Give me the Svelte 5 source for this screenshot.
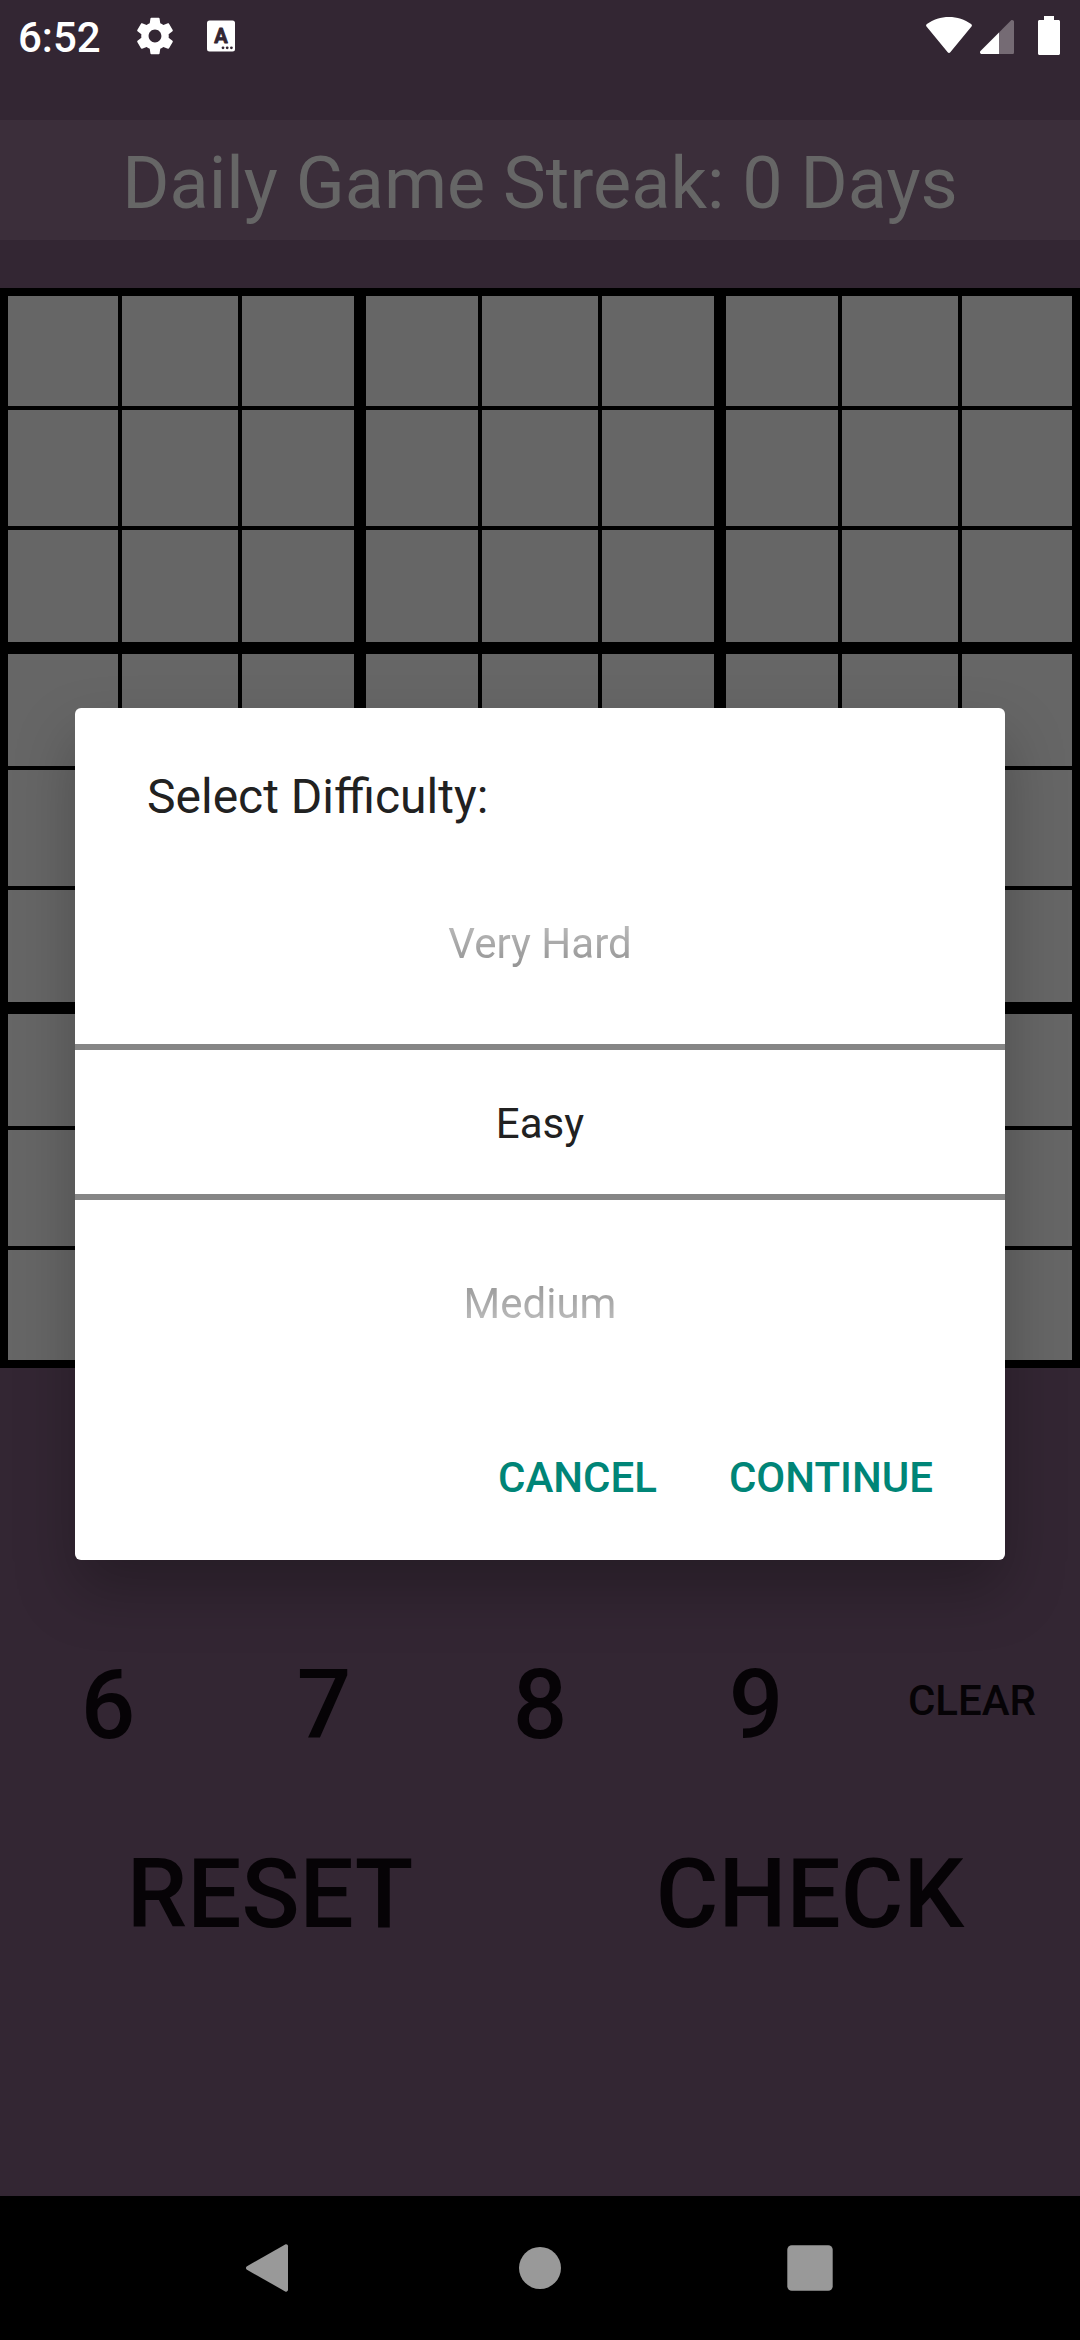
<script>
  const cells = Array.from({ length: 81 }, (_, i) => i);
  const digits = [6, 7, 8, 9];
</script>

<div class="screen">
  <header class="status">
    <span class="clock">6:52</span>
    <svg class="gear" width="44" height="44" viewBox="0 0 24 24" fill="#fff">
      <path d="M19.43 12.98c.04-.32.07-.64.07-.98s-.03-.66-.07-.98l2.11-1.65c.19-.15.24-.42.12-.64l-2-3.46c-.12-.22-.39-.3-.61-.22l-2.49 1c-.52-.4-1.08-.73-1.69-.98l-.38-2.65C14.46 2.18 14.25 2 14 2h-4c-.25 0-.46.18-.49.42l-.38 2.65c-.61.25-1.17.59-1.69.98l-2.49-1c-.23-.09-.49 0-.61.22l-2 3.46c-.13.22-.07.49.12.64l2.11 1.65c-.04.32-.07.65-.07.98s.03.66.07.98l-2.11 1.65c-.19.15-.24.42-.12.64l2 3.46c.12.22.39.3.61.22l2.49-1c.52.4 1.08.73 1.69.98l.38 2.65c.03.24.24.42.49.42h4c.25 0 .46-.18.49-.42l.38-2.65c.61-.25 1.17-.59 1.69-.98l2.49 1c.23.09.49 0 .61-.22l2-3.46c.12-.22.07-.49-.12-.64l-2.11-1.65zM12 15.5c-1.93 0-3.5-1.57-3.5-3.5s1.57-3.5 3.5-3.5 3.5 1.57 3.5 3.5-1.57 3.5-3.5 3.5z" />
    </svg>
    <svg class="keyboard" width="28" height="32" viewBox="0 0 28 32">
      <rect x="0" y="0.5" width="28" height="31" rx="2.5" fill="#fff" />
      <text class="glyph" x="14" y="22.6" text-anchor="middle">A</text>
      <g fill="#332633">
        <circle cx="16" cy="27.8" r="1.4" />
        <circle cx="20.2" cy="27.8" r="1.4" />
        <circle cx="24.4" cy="27.8" r="1.4" />
      </g>
    </svg>
    <span class="spacer"></span>
    <svg class="wifi" width="46" height="37" viewBox="0 0 46 37" fill="#fff">
      <path d="M.5 9.6C-.2 8.8 0 7.6.9 7 7.400 2.500 14.800 0 23 0s15.600 2.500 22.100 7c.9.6 1.100 1.800.4 2.600L24.300 35.300c-.7.9-1.900.9-2.600 0z" />
    </svg>
    <svg class="signal" width="34" height="34" viewBox="0 0 34 34">
      <path d="M19 12.500 30.900.600C32.100-.500 34 .300 34 2v30.400c0 .900-.700 1.600-1.600 1.600H19z" fill="#756b74" />
      <path d="M19 12.500V34H1.700C.200 34-.600 32.200.500 31.100z" fill="#fff" />
    </svg>
    <svg class="battery" width="22" height="39" viewBox="0 0 22 39" fill="#fff">
      <path d="M6 0h10v4h4.500c.8 0 1.500.7 1.500 1.500v32c0 .8-.7 1.500-1.500 1.500h-19C.7 39 0 38.300 0 37.500v-32C0 4.700.7 4 1.500 4H6z" />
    </svg>
  </header>

  <h1 class="streak">Daily Game Streak: 0 Days</h1>

  <div class="board">
    {#each cells as i (i)}
      <div
        class="cell"
        class:first-col={i % 9 === 0}
        class:last-col={i % 9 === 8}
        class:box-left={i % 9 === 3 || i % 9 === 6}
        class:box-right={i % 9 === 2 || i % 9 === 5}
        class:first-row={i < 9}
        class:last-row={i >= 72}
        class:box-top={Math.floor(i / 9) === 3 || Math.floor(i / 9) === 6}
        class:box-bottom={Math.floor(i / 9) === 2 || Math.floor(i / 9) === 5}
      ></div>
    {/each}
  </div>

  <div class="controls">
    <div class="row digits">
      {#each digits as d (d)}
        <button>{d}</button>
      {/each}
      <button class="clear">CLEAR</button>
    </div>
    <div class="row actions">
      <button>RESET</button>
      <button>CHECK</button>
    </div>
  </div>

  <nav class="navbar">
    <svg width="46" height="52" viewBox="3 0 46 52" fill="#999">
      <path d="M41.200 2.600 3 24.200c-1.400.8-1.400 2.800 0 3.600l38.200 21.600c1.300.700 2.800-.100 2.800-1.600V4.200c0-1.500-1.500-2.300-2.800-1.600z" overflow="visible" />
    </svg>
    <svg width="46" height="46" viewBox="0 0 46 46" fill="#999"><circle cx="23" cy="23" r="21" /></svg>
    <svg width="46" height="46" viewBox="0 0 46 46" fill="#999"><rect x="0.3" y="0.3" width="45.400" height="45.400" rx="4.500" /></svg>
  </nav>

  <div class="dialog" role="dialog" aria-label="Select Difficulty">
    <h2>Select Difficulty:</h2>
    <div class="picker">
      <div class="option previous">Very Hard</div>
      <div class="option selected">Easy</div>
      <div class="option next">Medium</div>
    </div>
    <div class="buttons">
      <button>CANCEL</button>
      <button>CONTINUE</button>
    </div>
  </div>
</div>

<style>
  :global(body) {
    margin: 0;
    background: #332633;
  }
  .screen {
    position: relative;
    display: flex;
    flex-direction: column;
    width: 1080px;
    height: 2340px;
    overflow: hidden;
    background: #332633;
    font-family: Roboto, "Liberation Sans", sans-serif;
  }
  button {
    border: 0;
    padding: 0;
    background: none;
    font: inherit;
    color: inherit;
  }
  .status {
    display: flex;
    align-items: flex-start;
    box-sizing: border-box;
    height: 120px;
    padding: 0 20px 0 18px;
    color: #fff;
  }
  .clock {
    width: 83px;
    line-height: 50px;
    padding-top: 13px;
    font-size: 42px;
    font-weight: 500;
    white-space: nowrap;
  }
  .gear {
    margin: 14px 0 0 32px;
  }
  .keyboard {
    margin: 20px 0 0 30px;
  }
  .glyph {
    font-family: Roboto, sans-serif;
    font-size: 20px;
    font-weight: 700;
    fill: #332633;
    stroke: #332633;
    stroke-width: 0.8px;
    stroke-linejoin: round;
  }
  .spacer {
    flex: 1;
  }
  .wifi {
    margin-top: 17px;
  }
  .signal {
    margin: 20px 0 0 8px;
  }
  .battery {
    margin: 16px 0 0 24px;
  }
  .streak {
    box-sizing: border-box;
    height: 120px;
    margin: 0;
    padding-top: 7px;
    background: #3b2e3a;
    color: #666;
    font-size: 72px;
    font-weight: 400;
    line-height: 113px;
    text-align: center;
  }
  .board {
    display: grid;
    grid-template-columns: repeat(9, 120px);
    grid-template-rows: repeat(9, 120px);
    margin-top: 48px;
    background: #000;
  }
  .cell {
    margin: 2px;
    background: #666;
  }
  .first-col {
    margin-left: 8px;
  }
  .last-col {
    margin-right: 8px;
  }
  .box-left {
    margin-left: 6px;
  }
  .box-right {
    margin-right: 6px;
  }
  .first-row {
    margin-top: 8px;
  }
  .last-row {
    margin-bottom: 8px;
  }
  .box-top {
    margin-top: 6px;
  }
  .box-bottom {
    margin-bottom: 6px;
  }
  .controls {
    flex: 1;
    padding-top: 242px;
    color: #060306;
    font-size: 96px;
    font-weight: 500;
  }
  .row {
    display: grid;
    height: 189px;
  }
  .digits {
    grid-template-columns: repeat(5, 1fr);
  }
  .actions {
    grid-template-columns: 1fr 1fr;
  }
  .clear {
    padding-bottom: 8px;
    font-size: 42px;
  }
  .navbar {
    display: grid;
    grid-template-columns: repeat(3, 270px);
    justify-content: center;
    justify-items: center;
    align-items: center;
    height: 144px;
    background: #000;
  }
  .navbar svg {
    overflow: visible;
  }
  .dialog {
    position: absolute;
    left: 75px;
    top: 708px;
    display: flex;
    flex-direction: column;
    width: 930px;
    height: 852px;
    border-radius: 6px;
    background: #fff;
    color: #212121;
    box-shadow: 0 30px 60px rgba(0, 0, 0, 0.25);
  }
  .dialog h2 {
    margin: 0;
    padding: 59px 72px 25px;
    font-size: 48px;
    font-weight: 400;
    line-height: 60px;
  }
  .picker {
    display: grid;
    grid-template-rows: 192px 156px 192px;
    font-size: 42px;
    text-align: center;
  }
  .option {
    box-sizing: border-box;
    line-height: 180px;
  }
  .previous {
    padding-top: 2px;
    mask-image: linear-gradient(rgba(0, 0, 0, 0.03), rgba(0, 0, 0, 0.78));
  }
  .selected {
    padding-top: 3px;
    border-top: 6px solid #868686;
    border-bottom: 6px solid #868686;
    line-height: 141px;
  }
  .next {
    padding-top: 14px;
    mask-image: linear-gradient(rgba(0, 0, 0, 0.78), rgba(0, 0, 0, 0.03));
  }
  .buttons {
    display: flex;
    flex: 1;
    justify-content: flex-end;
    gap: 72px;
    padding: 3px 72px 0 0;
    color: #008577;
    font-size: 42px;
    font-weight: 500;
  }
</style>
